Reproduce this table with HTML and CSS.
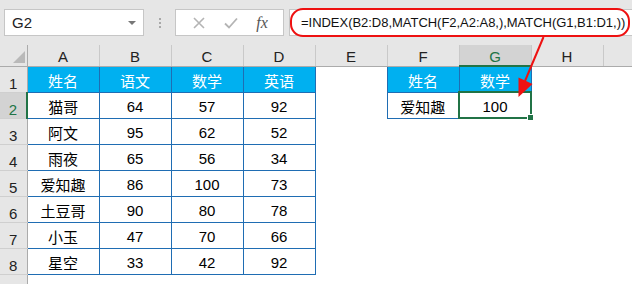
FILE: index.html
```html
<!DOCTYPE html>
<html>
<head>
  <meta charset="UTF-8">
  <title>INDEX + MATCH</title>
  <link rel="stylesheet" href="styles.css">
</head>
<body>
  <!-- barra de fórmulas -->
  <div class="toolbar">
    <div class="namebox">
      <span>G2</span>
      <span class="drop"></span>
    </div>
    <div class="grip"><i></i><i></i><i></i></div>
    <div class="fxbox">
      <svg width="12" height="12" viewBox="0 0 12 12"><path d="M1 1L11 11M11 1L1 11" stroke="#b4b4b4" stroke-width="1.6" fill="none"/></svg>
      <svg width="14" height="12" viewBox="0 0 14 12"><path d="M1 6.5L5 10.5L13 1.5" stroke="#b4b4b4" stroke-width="1.8" fill="none"/></svg>
      <span class="fx">fx</span>
    </div>
    <div class="formula">=INDEX(B2:D8,MATCH(F2,A2:A8,),MATCH(G1,B1:D1,))</div>
  </div>

  <!-- hoja -->
  <table class="sheet">
    <colgroup>
      <col class="c-head">
      <col class="c"><col class="c"><col class="c"><col class="c">
      <col class="c"><col class="c"><col class="c"><col class="c">
      <col class="c-rest">
    </colgroup>
    <tr class="r-head">
      <th class="corner"><span class="tri"></span></th>
      <th class="col">A</th><th class="col">B</th><th class="col">C</th><th class="col">D</th>
      <th class="col">E</th><th class="col">F</th><th class="col on">G</th><th class="col">H</th>
      <th class="col"></th>
    </tr>
    <tr>
      <th class="row">1</th>
      <td class="t h">姓名</td><td class="t h">语文</td><td class="t h">数学</td><td class="t h">英语</td>
      <td></td>
      <td class="t h">姓名</td><td class="t h">数学</td>
      <td></td><td></td>
    </tr>
    <tr>
      <th class="row on">2</th>
      <td class="t">猫哥</td><td class="t">64</td><td class="t">57</td><td class="t">92</td>
      <td></td>
      <td class="t">爱知趣</td><td class="t sel">100<span class="handle"></span></td>
      <td></td><td></td>
    </tr>
    <tr>
      <th class="row">3</th>
      <td class="t">阿文</td><td class="t">95</td><td class="t">62</td><td class="t">52</td>
      <td></td><td></td><td></td><td></td><td></td>
    </tr>
    <tr>
      <th class="row">4</th>
      <td class="t">雨夜</td><td class="t">65</td><td class="t">56</td><td class="t">34</td>
      <td></td><td></td><td></td><td></td><td></td>
    </tr>
    <tr>
      <th class="row">5</th>
      <td class="t">爱知趣</td><td class="t">86</td><td class="t">100</td><td class="t">73</td>
      <td></td><td></td><td></td><td></td><td></td>
    </tr>
    <tr>
      <th class="row">6</th>
      <td class="t">土豆哥</td><td class="t">90</td><td class="t">80</td><td class="t">78</td>
      <td></td><td></td><td></td><td></td><td></td>
    </tr>
    <tr>
      <th class="row">7</th>
      <td class="t">小玉</td><td class="t">47</td><td class="t">70</td><td class="t">66</td>
      <td></td><td></td><td></td><td></td><td></td>
    </tr>
    <tr>
      <th class="row">8</th>
      <td class="t">星空</td><td class="t">33</td><td class="t">42</td><td class="t">92</td>
      <td></td><td></td><td></td><td></td><td></td>
    </tr>
    <tr class="r-last">
      <th class="row"></th>
      <td></td><td></td><td></td><td></td><td></td><td></td><td></td><td></td><td></td>
    </tr>
  </table>

  <!-- marca roja sobre la fórmula -->
  <div class="ring"></div>
  <svg class="arrow" width="40" height="70" viewBox="510 34 40 70">
    <line x1="543.5" y1="37" x2="525" y2="81" stroke="#ee1111" stroke-width="2"/>
    <polygon points="518.5,97 518.5,77.5 532.5,84" fill="#ee1111"/>
  </svg>
</body>
</html>
```

FILE: styles.css
```css
/* Hoja de cálculo */
body {
  margin: 0;
  width: 632px;
  height: 284px;
  overflow: hidden;
  position: relative;
  background: #fff;
  font-family: "Liberation Sans", "Noto Sans CJK SC", sans-serif;
  font-size: 15px;
  color: #000;
}

/* barra superior */
.toolbar {
  display: flex;
  align-items: flex-start;
  height: 45px;
  padding: 9px 0 0 4px;
  box-sizing: border-box;
  background: #e6e6e6;
}
.namebox {
  width: 140px;
  height: 27px;
  box-sizing: border-box;
  border: 1px solid #c6c6c6;
  background: #fff;
  display: flex;
  align-items: center;
  justify-content: space-between;
  padding: 0 7px 0 7px;
  font-size: 15px;
  color: #222;
}
.drop {
  width: 0;
  height: 0;
  border-left: 4px solid transparent;
  border-right: 4px solid transparent;
  border-top: 4px solid #777;
}
.grip {
  width: 31px;
  height: 27px;
  display: flex;
  flex-direction: column;
  align-items: center;
  justify-content: center;
  gap: 2px;
}
.grip i {
  width: 2px;
  height: 2px;
  background: #a8a8a8;
}
.fxbox {
  width: 109px;
  height: 27px;
  box-sizing: border-box;
  border: 1px solid #c6c6c6;
  background: #fff;
  display: flex;
  align-items: center;
  justify-content: space-around;
  padding: 0 6px 0 8px;
}
.fx {
  font-family: "Liberation Serif", serif;
  font-style: italic;
  font-size: 16px;
  color: #555;
}
.formula {
  margin-left: 5px;
  flex: 1;
  height: 27px;
  box-sizing: border-box;
  border: 1px solid #c6c6c6;
  border-right: none;
  background: #fff;
  padding-left: 11px;
  font-size: 13px;
  letter-spacing: -0.03px;
  line-height: 25px;
  color: #111;
  white-space: nowrap;
}

/* tabla */
.sheet {
  border-collapse: collapse;
  table-layout: fixed;
  width: 632px;
}
.c-head { width: 27px; }
.c { width: 72px; }
.c-rest { width: 29px; }
.sheet tr { height: 26px; }
.sheet tr.r-head { height: 20px; }
.sheet tr.r-last { height: 11px; }
.sheet th,
.sheet td {
  padding: 2px 0 0 0;
  text-align: center;
  font-weight: normal;
  white-space: nowrap;
}
.sheet th.col {
  background: #e6e6e6;
  color: #222;
  border-left: 1px solid #c9c9c9;
  border-bottom: 1px solid #ababab;
  padding-top: 3px;
}
.sheet th.row {
  background: #e6e6e6;
  color: #222;
  border-right: 1px solid #ababab;
  border-bottom: 1px solid #cfcfcf;
  vertical-align: bottom;
  padding: 0;
}
.sheet th.corner {
  background: #e6e6e6;
  border-bottom: 1px solid #ababab;
  border-right: 1px solid #ababab;
  position: relative;
}
.tri {
  position: absolute;
  right: 2px;
  bottom: 3px;
  width: 0;
  height: 0;
  border-left: 12px solid transparent;
  border-bottom: 12px solid #b9b9b9;
}
.sheet th.col.on {
  background: #d3d3d3;
  color: #217346;
  border-bottom: 2px solid #217346;
}
.sheet th.row.on {
  background: #d3d3d3;
  color: #217346;
  border-right: 2px solid #217346;
}

/* celdas con datos */
.sheet td.t {
  border: 1px solid #1f6db3;
}
.sheet td.h {
  background: #00b0f0;
  color: #fff;
}
.sheet td.sel {
  border: 2px solid #217346;
  position: relative;
}
.handle {
  position: absolute;
  right: -4px;
  bottom: -4px;
  width: 5px;
  height: 5px;
  background: #217346;
  border: 1px solid #fff;
}

/* anotación */
.ring {
  position: absolute;
  left: 290px;
  top: 8px;
  width: 340px;
  height: 29px;
  box-sizing: border-box;
  border: 2px solid #ee1111;
  border-radius: 13px;
}
.arrow {
  position: absolute;
  left: 510px;
  top: 34px;
}
```
